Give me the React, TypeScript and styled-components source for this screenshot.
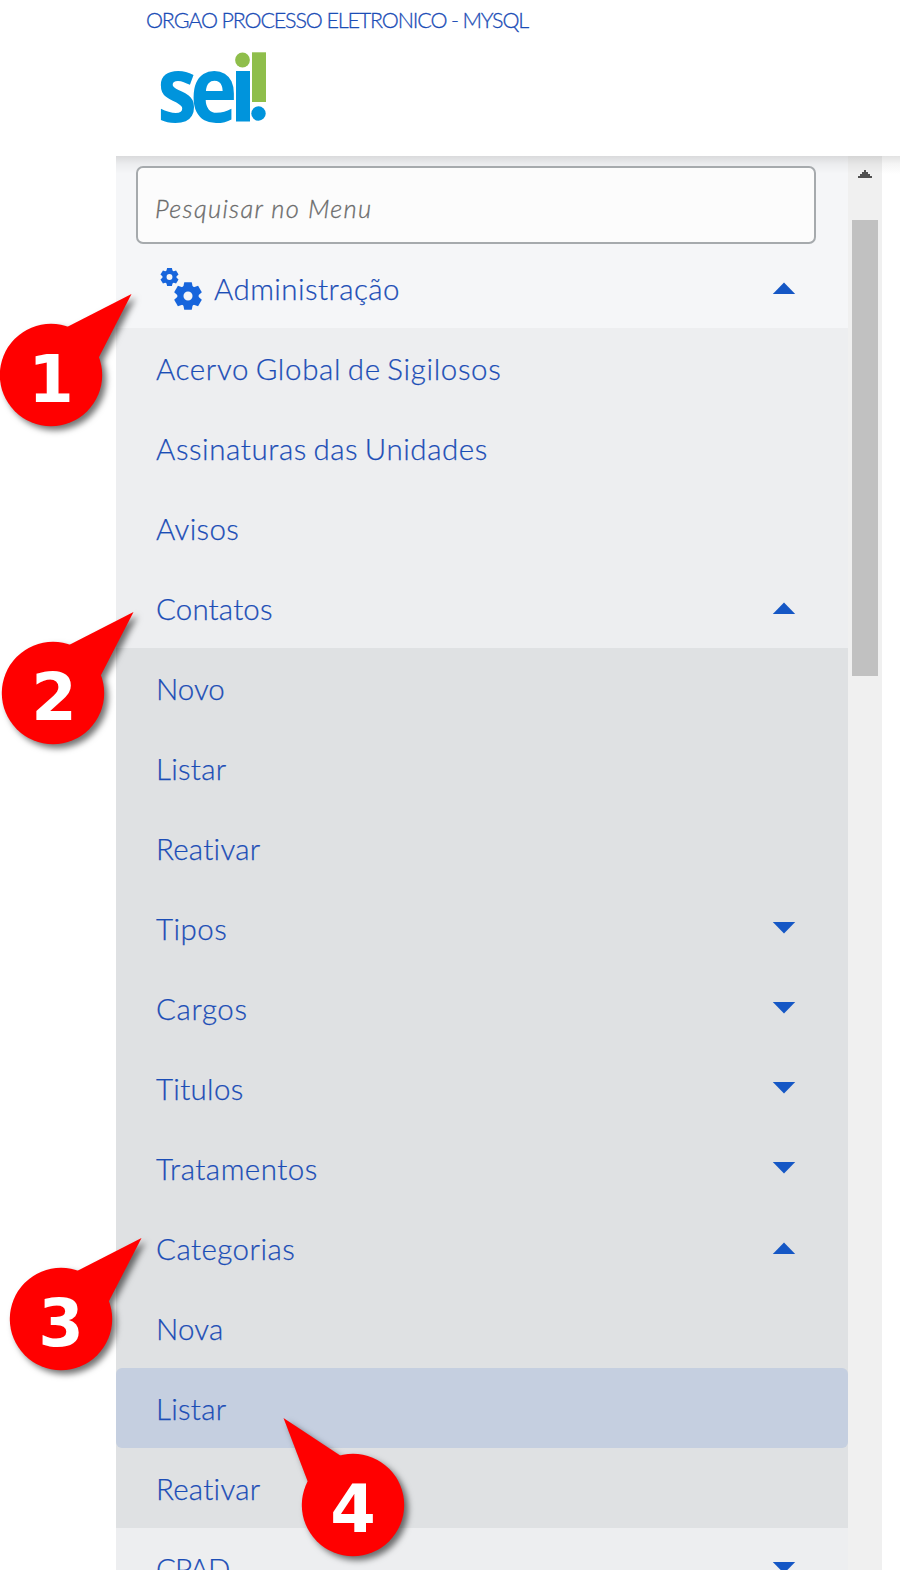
import React from 'react';
import styled, { createGlobalStyle } from 'styled-components';

const GlobalStyle = createGlobalStyle`
  *, *::before, *::after { box-sizing: border-box; }
  body { margin: 0; background: #fff; }
`;

const Page = styled.div`
  position: relative;
  width: 900px;
  height: 1570px;
  padding-left: 116px;
  display: flex;
  flex-direction: column;
  overflow: hidden;
  background: #fff;
  color: #1b4db6;
  font-family: Lato, 'Open Sans', sans-serif;
  font-weight: 300;
  font-variant-ligatures: none;
`;

const Header = styled.header`
  flex: none;
  height: 156px;
  padding: 6px 0 0 30px;
  background: #fff;
`;

const OrgName = styled.div`
  height: 29px;
  font-size: 21.5px;
  line-height: 29px;
  letter-spacing: -1.15px;
  -webkit-text-stroke: 0.3px currentColor;
  white-space: nowrap;
`;

const Logo = styled.svg`
  display: block;
  margin: 13px 0 0 10px;
  overflow: visible;
`;

const Body = styled.div`
  flex: 1;
  min-height: 0;
  display: flex;
  background: #fff;
  position: relative;
  &::before {
    content: '';
    position: absolute;
    inset: 0 0 auto 0;
    height: 18px;
    background: linear-gradient(rgba(0, 0, 0, 0.115), rgba(0, 0, 0, 0.04) 45%, transparent);
  }
`;

const Menu = styled.nav`
  width: 732px;
  background: #f5f6f8;
`;

const SearchBox = styled.div`
  width: 680px;
  height: 78px;
  margin: 10px 0 4px 20px;
  padding: 6px 0 0 17px;
  display: flex;
  align-items: center;
  position: relative;
  border: 2px solid #a6aaad;
  border-radius: 7px;
  background: #fcfcfc;
  color: #6b6b6b;
  font-size: 25.5px;
  font-style: italic;
  letter-spacing: 1.3px;
  -webkit-text-stroke: 0.3px currentColor;
`;

const Group = styled.div<{ $level: number }>`
  background: ${(p) => ['#f5f6f8', '#edeef0', '#dfe1e3'][p.$level]};
`;

const Row = styled.div<{ $active?: boolean }>`
  height: 80px;
  padding: 2px 52px 0 40px;
  display: flex;
  align-items: center;
  border-radius: ${(p) => (p.$active ? '6px' : '0')};
  background: ${(p) => (p.$active ? '#c5cfe0' : 'transparent')};
`;

const Label = styled.span<{ $track: number }>`
  flex: 1;
  font-size: 29.5px;
  line-height: 40px;
  letter-spacing: ${(p) => p.$track}px;
  word-spacing: -2px;
  -webkit-text-stroke: 0.25px currentColor;
  white-space: nowrap;
`;

const Caret = styled.svg`
  flex: none;
  margin-top: -2px;
`;

const Gears = styled.svg`
  flex: none;
  margin: 0 12px 0 4px;
`;

const ScrollTrack = styled.div`
  width: 34px;
  padding: 14px 4px 0;
  background: #f0f0f0;
  display: flex;
  flex-direction: column;
  align-items: center;
`;

const ScrollThumb = styled.div`
  width: 26px;
  height: 456px;
  margin-top: 42px;
  background: #c1c1c1;
`;

const CalloutSvg = styled.svg<{ $x: number; $y: number }>`
  position: absolute;
  left: ${(p) => p.$x - 100}px;
  top: ${(p) => p.$y - 100}px;
  filter: drop-shadow(4px 4px 3px rgba(0, 0, 0, 0.55));
`;

function Gear({ x, y, r }: { x: number; y: number; r: number }) {
  return (
    <g transform={`translate(${x} ${y}) scale(${r / 14})`}>
      <circle r="7.7" fill="none" stroke="#1765dc" strokeWidth="6.2" />
      {[0, 60, 120, 180, 240, 300].map((a) => (
        <path key={a} d="M-5 -8 L-3.8 -14 H3.8 L5 -8Z" fill="#1765dc" transform={`rotate(${a})`} />
      ))}
    </g>
  );
}

type Item = { text: string; track?: number; caret?: 'up' | 'down'; active?: boolean; icon?: boolean };

function MenuRow({ text, track = 0, caret, active, icon }: Item) {
  return (
    <Row $active={active}>
      {icon && (
        <Gears width="42" height="44" viewBox="159.5 267 42 44">
          <Gear x={169} y={277} r={9} />
          <Gear x={187.5} y={296} r={13.8} />
        </Gears>
      )}
      <Label $track={track}>{text}</Label>
      {caret && (
        <Caret width="24" height="12" viewBox="0 0 24 12">
          <path d={caret === 'up' ? 'M0.8 12 L12 0.6 L23.2 12Z' : 'M0.8 0 L12 11.4 L23.2 0Z'} fill="#1557c5" />
        </Caret>
      )}
    </Row>
  );
}

const adminItems: Item[] = [
  { text: 'Acervo Global de Sigilosos', track: 0.64 },
  { text: 'Assinaturas das Unidades', track: 0.57 },
  { text: 'Avisos', track: 0.35 },
  { text: 'Contatos', track: 0.15, caret: 'up' },
];

const contactItems: Item[] = [
  { text: 'Novo' },
  { text: 'Listar', track: 0.25 },
  { text: 'Reativar', track: 0.25 },
  { text: 'Tipos', track: 0.5, caret: 'down' },
  { text: 'Cargos', track: 0.6, caret: 'down' },
  { text: 'Titulos', track: 0.3, caret: 'down' },
  { text: 'Tratamentos', track: 0.5, caret: 'down' },
  { text: 'Categorias', track: 0.45, caret: 'up' },
  { text: 'Nova', track: 0.2 },
  { text: 'Listar', track: 0.25, active: true },
  { text: 'Reativar', track: 0.25 },
];

const rightTail = '16,-48 80.5,-81 47.5,-17 0,0';
const leftTail = '-12,-49 -69.5,-87 -45.5,-24 0,0';

const callouts = [
  { n: '1', x: 51, y: 375, tail: rightTail, dx: 0 },
  { n: '2', x: 53, y: 693, tail: rightTail, dx: 1 },
  { n: '3', x: 61, y: 1319, tail: rightTail, dx: 0 },
  { n: '4', x: 353, y: 1505, tail: leftTail, dx: 0 },
];

export default function App() {
  return (
    <Page>
      <GlobalStyle />
      <Header>
        <OrgName>ORGAO PROCESSO ELETRONICO - MYSQL</OrgName>
        <Logo width="112" height="78" viewBox="156 48 112 78">
          <text
            transform="translate(157.2 121.5) scale(.87 1)"
            fill="#0094dc"
            fontFamily="Open Sans, Noto Sans, sans-serif"
            fontWeight="700"
            fontSize="92"
            letterSpacing="-8"
          >
            se
          </text>
          <rect x="236" y="71" width="14" height="50.5" fill="#0094dc" />
          <circle cx="258.5" cy="113.5" r="7.2" fill="#0094dc" />
          <circle cx="242.5" cy="60" r="7.4" fill="#8fbe4b" />
          <rect x="252" y="52.3" width="14" height="49.7" fill="#8fbe4b" />
        </Logo>
      </Header>
      <Body>
        <Menu>
          <SearchBox>Pesquisar no Menu</SearchBox>
          <Group $level={0}>
            <MenuRow text="Administração" track={0.45} icon caret="up" />
          </Group>
          <Group $level={1}>
            {adminItems.map((item) => (
              <MenuRow key={item.text} {...item} />
            ))}
          </Group>
          <Group $level={2}>
            {contactItems.map((item, i) => (
              <MenuRow key={i} {...item} />
            ))}
          </Group>
          <Group $level={1}>
            <MenuRow text="CPAD" track={-0.95} caret="down" />
          </Group>
        </Menu>
        <ScrollTrack>
          <svg width="14" height="8" viewBox="0 0 14 8">
            <path d="M0 8 V6 H2 V4 H4 V2 H6 V0 H8 V2 H10 V4 H12 V6 H14 V8Z" fill="#505050" />
          </svg>
          <ScrollThumb />
        </ScrollTrack>
      </Body>
      {callouts.map((c) => (
        <CalloutSvg key={c.n} $x={c.x} $y={c.y} width="200" height="200" viewBox="-100 -100 200 200">
          <circle r="51.2" fill="#f00" />
          <polygon points={c.tail} fill="#f00" />
          <text
            x={c.dx}
            y="27"
            textAnchor="middle"
            fill="#fff"
            fontFamily="DejaVu Sans, sans-serif"
            fontWeight="700"
            fontSize="65.5"
          >
            {c.n}
          </text>
        </CalloutSvg>
      ))}
    </Page>
  );
}
